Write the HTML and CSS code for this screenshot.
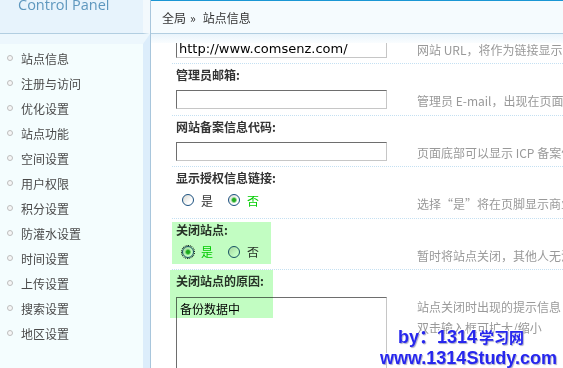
FILE: index.html
```html
<!DOCTYPE html>
<html>
<head>
    <meta charset="UTF-8">
    <title>站点信息 - Control Panel</title>
    <link rel="stylesheet" href="styles.css">
</head>
<body>
    <div class="frame">
        <div class="side">
            <div class="side-head"><div class="logo">Control Panel</div></div>
            <ul class="menu">
                <li>站点信息</li>
                <li>注册与访问</li>
                <li>优化设置</li>
                <li>站点功能</li>
                <li>空间设置</li>
                <li>用户权限</li>
                <li>积分设置</li>
                <li>防灌水设置</li>
                <li>时间设置</li>
                <li>上传设置</li>
                <li>搜索设置</li>
                <li>地区设置</li>
            </ul>
        </div>
        <div class="main">
            <div class="crumb">全局<span class="sep">&raquo;</span>站点信息</div>
            <div class="scroll">
                <div class="band"></div>
                <div class="settings">
                    <div class="setting">
                        <div class="label">网站 URL:</div>
                        <div class="field"><input class="txt" type="text" value="http://www.comsenz.com/"></div>
                        <div class="hint">网站 URL，将作为链接显示在页面底部</div>
                    </div>
                    <div class="setting">
                        <div class="label">管理员邮箱:</div>
                        <div class="field"><input class="txt" type="text" value=""></div>
                        <div class="hint">管理员 E-mail，出现在页面底部</div>
                    </div>
                    <div class="setting">
                        <div class="label">网站备案信息代码:</div>
                        <div class="field"><input class="txt" type="text" value=""></div>
                        <div class="hint">页面底部可以显示 ICP 备案信息</div>
                    </div>
                    <div class="setting">
                        <div class="label">显示授权信息链接:</div>
                        <div class="field">
                            <div class="radios">
                                <label class="opt"><input type="radio" name="license">是</label>
                                <label class="opt on"><input type="radio" name="license" checked>否</label>
                            </div>
                        </div>
                        <div class="hint">选择“是”将在页脚显示商业授权用户链接</div>
                    </div>
                    <div class="setting">
                        <div class="mark mark-close"></div>
                        <div class="label">关闭站点:</div>
                        <div class="field">
                            <div class="radios">
                                <label class="opt on"><input class="focus" type="radio" name="closed" checked>是</label>
                                <label class="opt"><input type="radio" name="closed">否</label>
                            </div>
                        </div>
                        <div class="hint">暂时将站点关闭，其他人无法访问，但不影响管理员访问</div>
                    </div>
                    <div class="setting tall">
                        <div class="mark mark-reason"></div>
                        <div class="label">关闭站点的原因:</div>
                        <div class="field"><textarea class="area">备份数据中</textarea></div>
                        <div class="hint">站点关闭时出现的提示信息<br>双击输入框可扩大/缩小</div>
                    </div>
                </div>
            </div>
        </div>
    </div>
    <div class="watermark">
        <div class="wm-by">by：1314<span class="wm-cn">学习网</span></div>
        <div class="wm-url">www.1314Study.com</div>
    </div>
</body>
</html>
```

FILE: styles.css
```css
html, body {
    margin: 0;
    height: 100%;
    overflow: hidden;
}
body {
    font-family: "Noto Sans CJK SC", sans-serif;
    font-size: 12px;
    color: #333333;
    background-color: #FFFFFF;
}
.frame {
    display: flex;
    height: 100%;
}

/* left menu frame */
.side {
    width: 150px;
    flex-shrink: 0;
    display: flex;
    flex-direction: column;
    border-right: 1px solid #A8C6DC;
    background-color: #F4FDFE;
}
.side-head {
    height: 33px;
    overflow: hidden;
    border-bottom: 1px solid #B2CEE1;
    border-right: 7px solid #F3F9FD;
    background-color: #E7F3FC;
}
.logo {
    margin: -2px 0 0 18px;
    font-family: "Open Sans", sans-serif;
    font-size: 14.5px;
    line-height: 14px;
    color: #5E97BE;
}
.menu {
    flex: 1;
    list-style: none;
    margin: 0;
    padding: 1.5px 0 0 0;
    border-top: 10px solid #EDF7FD;
    border-right: 7px solid #DCEDFB;
}
.menu li {
    position: relative;
    height: 25px;
    line-height: 25px;
    padding-left: 21px;
    color: #4A4A4A;
}
.menu li::before {
    content: "";
    position: absolute;
    left: 7px;
    top: 9px;
    width: 4px;
    height: 4px;
    border: 1px solid #BDBDBD;
    border-radius: 50%;
    background-color: #F6F6F6;
}

/* right main frame */
.main {
    flex: 1;
    min-width: 0;
    display: flex;
    flex-direction: column;
}
.crumb {
    height: 32px;
    line-height: 33px;
    padding-left: 11px;
    border-top: 1px solid #1A96D4;
    border-bottom: 1px solid #B2CEE1;
    background-color: #F5FBFE;
    color: #333333;
}
.sep {
    margin: 0 7px 0 4px;
}
.scroll {
    flex: 1;
    position: relative;
    overflow: hidden;
}
.band {
    position: absolute;
    top: 0;
    left: 0;
    right: 0;
    height: 9px;
    z-index: 2;
    background: linear-gradient(#E9F4FB, #FAFDFF);
}
.settings {
    margin-top: -22.5px;
    padding-left: 21px;
}
.setting {
    position: relative;
    display: grid;
    grid-template-columns: 241px auto;
    grid-template-rows: 22px 28.5px;
    border-top: 1px dotted #C4E0F2;
    white-space: nowrap;
}
.setting.tall {
    grid-template-rows: 22px 120px;
}
.label {
    grid-column: 1 / -1;
    padding-left: 4px;
    line-height: 22px;
    font-weight: bold;
    color: #333333;
}
.field {
    padding: 4px 0 0 4px;
}
.hint {
    padding: 4px 0 0 4px;
    line-height: 21px;
    color: #999999;
}
.txt {
    box-sizing: border-box;
    display: block;
    width: 211px;
    height: 19px;
    margin: 0;
    padding: 0 2px;
    border: 1px solid;
    border-color: #6E6E6E #C6C6C6 #C6C6C6 #6E6E6E;
    font-family: "DejaVu Sans", sans-serif;
    font-size: 13px;
    color: #000000;
    background-color: transparent;
}
.area {
    box-sizing: border-box;
    display: block;
    width: 211px;
    height: 100px;
    margin: 1px 0 0 0;
    padding: 2px 3px;
    border: 1px solid;
    border-color: #6E6E6E #C6C6C6 #C6C6C6 #6E6E6E;
    font-family: "Noto Sans CJK SC", sans-serif;
    font-size: 12px;
    line-height: 18px;
    color: #000000;
    background-color: transparent;
    resize: none;
}
.radios {
    display: flex;
    align-items: center;
    height: 14px;
    padding-left: 6px;
}
.opt {
    display: flex;
    align-items: center;
    margin-right: 15px;
    color: #333333;
}
.opt.on {
    color: #00CC00;
}
.opt input {
    -webkit-appearance: none;
    appearance: none;
    box-sizing: border-box;
    width: 12px;
    height: 12px;
    margin: 0 7px 0 0;
    border: 1px solid #1C5180;
    border-radius: 50%;
    background: linear-gradient(135deg, #D8D8D2, #FFFFFF 70%);
}
.opt input:checked {
    background: radial-gradient(circle, #1FA11F 0, #2DB22D 1.6px, #9EDB9E 2.6px, transparent 3.2px), linear-gradient(135deg, #D8D8D2, #FFFFFF 70%);
}
.opt input.focus {
    outline: 1px dotted #000000;
    outline-offset: 0;
}

/* green highlight marks drawn over the screenshot */
.mark {
    position: absolute;
    z-index: 1;
    background-color: #C2FDC2;
    mix-blend-mode: multiply;
    pointer-events: none;
}
.mark-close {
    top: 3.5px;
    left: 0;
    width: 99px;
    height: 42px;
}
.mark-reason {
    top: 0;
    left: -2px;
    width: 103px;
    height: 48px;
}

/* site watermark */
.watermark {
    position: absolute;
    left: 380px;
    top: 327px;
    font-family: "Liberation Sans", "Noto Sans CJK SC", sans-serif;
    font-size: 18px;
    font-weight: bold;
    line-height: 20px;
    color: #2626EE;
    text-shadow: -1px -1px 0 #FFFFFF, 1px 1px 1px #A8A8C8;
    white-space: nowrap;
}
.wm-by {
    padding-left: 18px;
}
.wm-cn {
    margin-left: 2px;
    font-size: 15px;
}
```
